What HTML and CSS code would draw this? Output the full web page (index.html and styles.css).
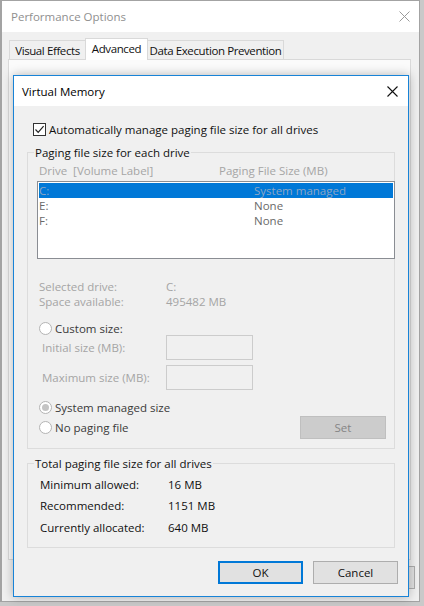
FILE: index.html
```html
<!DOCTYPE html>
<html lang="en">
<head>
<meta charset="utf-8">
<title>Virtual Memory</title>
<link rel="stylesheet" href="styles.css">
</head>
<body>
<div class="win">
  <div class="win-title">
    <span>Performance Options</span>
    <svg class="win-close" width="11" height="11" viewBox="0 0 11 11"><path d="M0.5 0.5 L10.5 10.5 M10.5 0.5 L0.5 10.5" /></svg>
  </div>
  <div class="win-body">
    <div class="tabs">
      <div class="tab t1">Visual Effects</div>
      <div class="tab t2 active">Advanced</div>
      <div class="tab t3">Data Execution Prevention</div>
    </div>
    <div class="panel"></div>
    <div class="win-actions"><div class="wbtn"></div></div>
  </div>

  <div class="dialog">
    <div class="dlg-title">
      <span>Virtual Memory</span>
      <svg class="dlg-close" width="11" height="11" viewBox="0 0 11 11"><path d="M0.5 0.5 L10.5 10.5 M10.5 0.5 L0.5 10.5" /></svg>
    </div>
    <div class="dlg-body">
      <div class="check-row">
        <span class="checkbox"><svg width="11" height="11" viewBox="0 0 11 11"><path d="M1.5 5.5 L4.2 8.3 L9.6 2.2" /></svg></span>
        <span>Automatically manage paging file size for all drives</span>
      </div>

      <div class="group g1">
        <div class="group-label">Paging file size for each drive</div>
        <div class="cols dim"><span>Drive&nbsp; [Volume Label]</span><span>Paging File Size (MB)</span></div>
        <div class="listbox">
          <div class="lrow selected"><span>C:</span><span>System managed</span></div>
          <div class="lrow"><span>E:</span><span>None</span></div>
          <div class="lrow"><span>F:</span><span>None</span></div>
        </div>
        <div class="info dim">
          <span>Selected drive:</span><span>C:</span>
          <span>Space available:</span><span>495482 MB</span>
        </div>
        <div class="radio-row custom"><span class="radio"></span><span>Custom size:</span></div>
        <div class="size-row"><span class="dim">Initial size (MB):</span><span class="field"></span></div>
        <div class="size-row second"><span class="dim">Maximum size (MB):</span><span class="field"></span></div>
        <div class="radio-row sys"><span class="radio on"></span><span>System managed size</span></div>
        <div class="nopage-row">
          <div class="radio-inline"><span class="radio"></span><span>No paging file</span></div>
          <div class="btn set">Set</div>
        </div>
      </div>

      <div class="group g2">
        <div class="group-label">Total paging file size for all drives</div>
        <div class="totals">
          <span>Minimum allowed:</span><span>16 MB</span>
          <span>Recommended:</span><span>1151 MB</span>
          <span>Currently allocated:</span><span>640 MB</span>
        </div>
      </div>

      <div class="actions">
        <div class="btn ok">OK</div>
        <div class="btn cancel">Cancel</div>
      </div>
    </div>
  </div>
</div>
</body>
</html>
```
FILE: styles.css
```css
html, body {
  margin: 0;
  padding: 0;
}
body {
  width: 424px;
  height: 606px;
  background: #c9c9c9;
  font-family: "Open Sans", "Noto Sans", sans-serif;
  font-size: 11.5px;
  color: #1a1a1a;
  overflow: hidden;
}
.win {
  position: relative;
  width: 420px;
  height: 602px;
  box-sizing: border-box;
  border: 1px solid #a3a3a3;
  border-left-width: 2px;
  background: #f0f0f0;
  display: flex;
  flex-direction: column;
}
.win-title {
  height: 31px;
  flex: none;
  background: #fff;
  display: flex;
  align-items: center;
  justify-content: space-between;
  padding: 0 9px 0 9px;
  color: #8f8f8f;
}
.win-close path {
  stroke: #9a9a9a;
  stroke-width: 1;
  fill: none;
}
.win-body {
  flex: 1;
  display: flex;
  flex-direction: column;
}
.tabs {
  display: flex;
  align-items: flex-end;
  height: 21px;
  margin-top: 6px;
  padding-left: 7px;
  position: relative;
  z-index: 1;
}
.tab {
  height: 19px;
  box-sizing: border-box;
  border: 1px solid #d9d9d9;
  border-bottom: 0;
  display: flex;
  align-items: center;
  justify-content: center;
  padding-top: 1px;
  color: #111;
  background: #f0f0f0;
  white-space: nowrap;
  letter-spacing: -0.4px;
  flex: none;
}
.t1 { width: 77px; }
.t2 { width: 63px; margin-left: -1px; }
.t3 { width: 137px; margin-left: -1px; }
.tab.active {
  height: 22px;
  margin-bottom: -1px;
  background: #fff;
  padding-top: 0;
  padding-bottom: 2px;
}
.panel {
  margin-left: 6px;
  width: 403px;
  height: 501px;
  box-sizing: border-box;
  border: 1px solid #d9d9d9;
  background: #fbfbfb;
}
.win-actions {
  display: flex;
  justify-content: flex-end;
  padding-right: 4px;
  margin-top: 6px;
}
.wbtn {
  width: 75px;
  height: 23px;
  box-sizing: border-box;
  border: 1px solid #adadad;
  background: #e1e1e1;
}

/* Virtual Memory dialog (window on top of the other window) */
.dialog {
  position: absolute;
  left: 11px;
  top: 74px;
  width: 396px;
  height: 522px;
  box-sizing: border-box;
  border: 1px solid #1883d7;
  background: #f0f0f0;
  box-shadow: 0 0 10px rgba(0, 0, 0, 0.28);
  display: flex;
  flex-direction: column;
  z-index: 2;
}
.dlg-title {
  height: 30px;
  flex: none;
  background: #fff;
  display: flex;
  align-items: center;
  justify-content: space-between;
  padding: 0 10px 0 8px;
  color: #000;
}
.dlg-close path {
  stroke: #111;
  stroke-width: 1.1;
  fill: none;
}
.dlg-body {
  flex: 1;
  padding: 17px 0 0 13px;
}
.check-row {
  height: 13px;
  margin-left: 6px;
  display: flex;
  align-items: center;
  gap: 3px;
  color: #111;
}
.checkbox {
  width: 13px;
  height: 13px;
  box-sizing: border-box;
  border: 1px solid #333;
  background: #fff;
  display: flex;
  align-items: center;
  justify-content: center;
  flex: none;
}
.checkbox path {
  stroke: #222;
  stroke-width: 1.2;
  fill: none;
}
.group {
  width: 368px;
  box-sizing: border-box;
  border: 1px solid #dcdcdc;
}
.group-label {
  width: max-content;
  margin: -8px 0 0 6px;
  padding: 0 1px;
  line-height: 16px;
  background: #f0f0f0;
  color: #111;
}
.dim { color: #a5a5a5; }
.g1 {
  margin-top: 16px;
  padding-bottom: 9px;
}
.cols {
  margin-top: 2px;
  line-height: 15px;
  padding-left: 11px;
  display: grid;
  grid-template-columns: 180px auto;
}
.listbox {
  margin: 3px -1px 0 9px;
  height: 78px;
  box-sizing: border-box;
  border: 1px solid #8a8d93;
  background: #fff;
  padding: 1px;
}
.lrow {
  height: 15px;
  line-height: 15px;
  display: grid;
  grid-template-columns: 215px auto;
  color: #6a6a6a;
}
.lrow.selected {
  background: #0078d7;
  color: #8ea6c4;
}
.info {
  margin-top: 20px;
  padding-left: 11px;
  line-height: 15px;
  display: grid;
  grid-template-columns: 127px auto;
}
.radio-row {
  padding-left: 11px;
  display: flex;
  align-items: center;
  gap: 3px;
  color: #3a3a3a;
}
.radio-row.custom {
  margin-top: 12px;
  height: 14px;
}
.radio-row.sys {
  margin-top: 10px;
  height: 15px;
}
.radio {
  width: 13px;
  height: 13px;
  box-sizing: border-box;
  border: 1px solid #b4b4b4;
  border-radius: 50%;
  background: #fff;
  flex: none;
  display: flex;
  align-items: center;
  justify-content: center;
}
.radio.on::after {
  content: "";
  width: 7px;
  height: 7px;
  border-radius: 50%;
  background: #c4c4c4;
}
.size-row {
  padding-left: 14px;
  display: grid;
  grid-template-columns: 124px 87px;
  align-items: center;
}
.size-row.second { margin-top: 5px; }
.field {
  height: 25px;
  box-sizing: border-box;
  border: 1px solid #cccccc;
  background: #f0f0f0;
}
.nopage-row {
  margin-top: 1px;
  display: flex;
  align-items: center;
  justify-content: space-between;
  padding: 0 8px 0 11px;
}
.radio-inline {
  display: flex;
  align-items: center;
  gap: 3px;
  color: #3a3a3a;
}
.btn {
  width: 85px;
  height: 23px;
  box-sizing: border-box;
  display: flex;
  align-items: center;
  justify-content: center;
  border: 1px solid #adadad;
  background: #e1e1e1;
  color: #111;
}
.btn.set {
  width: 86px;
  background: #cccccc;
  border-color: #bfbfbf;
  color: #858585;
}
.g2 {
  margin-top: 14px;
  padding-bottom: 9px;
}
.totals {
  margin-top: 1.5px;
  padding-left: 12px;
  line-height: 21.5px;
  display: grid;
  grid-template-columns: 128px auto;
  color: #111;
}
.actions {
  margin-top: 13px;
  display: flex;
  justify-content: flex-end;
  gap: 10px;
  padding-right: 10px;
}
.btn.ok {
  border: 2px solid #0078d7;
}
```
